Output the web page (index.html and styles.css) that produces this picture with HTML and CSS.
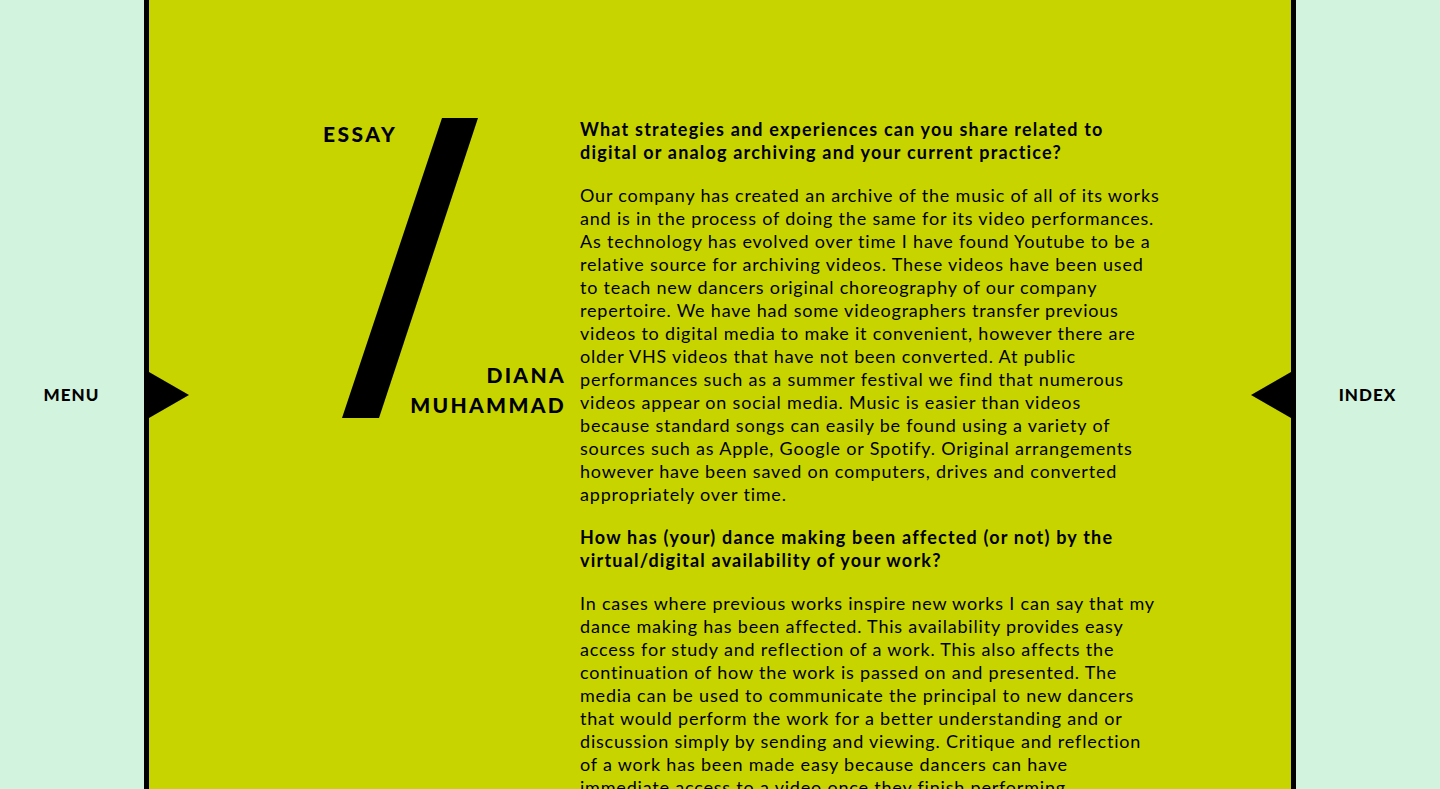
FILE: index.html
```html
<!DOCTYPE html>
<html lang="en">
<head>
<meta charset="utf-8">
<title>Essay — Diana Muhammad</title>
<link rel="stylesheet" href="styles.css">
</head>
<body>
<div class="frame">
  <nav class="side side-left">
    <a class="side-link" href="#">MENU</a>
    <span class="arrow arrow-right"></span>
  </nav>
  <main class="main">
    <article class="essay">
      <header class="essay-head">
        <span class="essay-kind">ESSAY</span>
        <svg class="slash" width="136" height="300" viewBox="0 0 136 300" aria-hidden="true">
          <polygon points="100,0 136,0 37,300 0,300" fill="#000"/>
        </svg>
        <h1 class="essay-author">DIANA<br>MUHAMMAD</h1>
      </header>
      <div class="essay-body">
        <h2 class="q">What strategies and experiences can you share related to digital or analog archiving and your current practice?</h2>
        <p>Our company has created an archive of the music of all of its works and is in the process of doing the same for its video performances. As technology has evolved over time I have found Youtube to be a relative source for archiving videos. These videos have been used to teach new dancers original choreography of our company repertoire. We have had some videographers transfer previous videos to digital media to make it convenient, however there are older VHS videos that have not been converted. At public performances such as a summer festival we find that numerous videos appear on social media. Music is easier than videos because&nbsp;standard songs can easily be found using a variety of sources such as Apple, Google or Spotify. Original arrangements however have been saved on computers, drives and converted appropriately over time.</p>
        <h2 class="q">How has (your) dance making been affected (or not) by the virtual/digital availability of your work?</h2>
        <p>In cases where previous works inspire new works I can say that my dance making has been affected. This availability provides easy access for study and reflection of a work. This also affects the continuation of how the work is passed on and presented. The media can be used to communicate the principal to new dancers that would perform the work for a better understanding and or discussion simply by sending and viewing. Critique and reflection of a work has been made easy because dancers can have immediate access to a video once they finish performing.</p>
      </div>
    </article>
  </main>
  <nav class="side side-right">
    <span class="arrow arrow-left"></span>
    <a class="side-link" href="#">INDEX</a>
  </nav>
</div>
</body>
</html>
```
FILE: styles.css
```css
html, body {
  margin: 0;
  padding: 0;
  height: 100%;
  overflow: hidden;
}
body {
  font-family: "Lato", "Liberation Sans", sans-serif;
  color: #000;
  background: #d2f3dd;
}
.frame {
  display: flex;
  height: 100vh;
}
.side {
  position: relative;
  flex: 0 0 144px;
  display: flex;
  align-items: center;
  justify-content: center;
  background: #d2f3dd;
  z-index: 2;
}
.side-link {
  color: #000;
  text-decoration: none;
  font-weight: 900;
  font-size: 17px;
  letter-spacing: 1px;
  margin-right: 1px;
}
.arrow {
  position: absolute;
  top: 50%;
  width: 0;
  height: 0;
  border-top: 23.5px solid transparent;
  border-bottom: 23.5px solid transparent;
  transform: translateY(-50%);
}
.arrow-right {
  left: calc(100% + 5px);
  border-left: 40px solid #000;
}
.arrow-left {
  right: calc(100% + 5px);
  border-right: 40px solid #000;
}
.main {
  flex: 1 1 auto;
  background: #c8d400;
  border-left: 5px solid #000;
  border-right: 5px solid #000;
  overflow-y: auto;
  scrollbar-width: none;
}
.essay {
  display: flex;
  gap: 15px;
  padding: 118px 0 80px 174px;
}
.essay-head {
  flex: 0 0 242px;
  height: 300px;
  display: grid;
}
.essay-head > * {
  grid-area: 1 / 1;
}
.essay-kind {
  justify-self: start;
  align-self: start;
  font-weight: 900;
  font-size: 21px;
  line-height: 32px;
  letter-spacing: 2.5px;
}
.slash {
  justify-self: start;
  align-self: start;
  margin-left: 19px;
  display: block;
}
.essay-author {
  justify-self: end;
  align-self: end;
  margin: 0 -1px -2px 0;
  text-align: right;
  font-weight: 900;
  font-size: 21px;
  line-height: 30px;
  letter-spacing: 2.3px;
}
.essay-body {
  width: 581px;
  font-size: 18px;
  line-height: 23px;
  letter-spacing: 0.8px;
}
.essay-body .q {
  margin: 0 0 20px;
  font-size: 18px;
  line-height: 23px;
  font-weight: 700;
  letter-spacing: 1.2px;
}
.essay-body p {
  margin: 0 0 20px;
}
```
